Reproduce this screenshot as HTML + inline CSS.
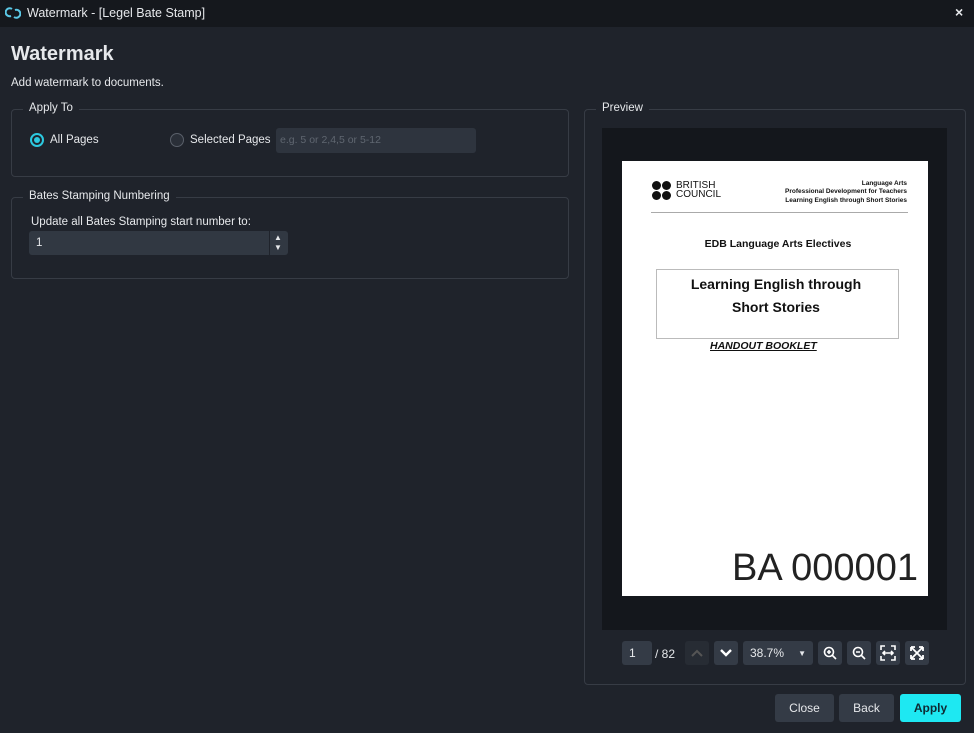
<!DOCTYPE html><html><head><style>
*{margin:0;padding:0;box-sizing:border-box}
body{width:974px;height:733px;background:#1f232b;font-family:"Liberation Sans",sans-serif;color:#e6e8eb;position:relative;overflow:hidden;font-size:12px}
.a{position:absolute}
.box{position:absolute;border:1px solid #373c45;border-radius:4px}
.leg{position:absolute;background:#1f232b;padding:0 6px;font-size:11.5px;color:#e6e8eb}
.btn{position:absolute;background:#343b46;border-radius:3px;display:flex;align-items:center;justify-content:center}
.pb{font-family:"Liberation Sans",sans-serif;font-weight:bold;color:#111}
.d{position:absolute;width:9px;height:9px;border-radius:50%;background:#111}
</style></head><body>
<div class="a" style="left:0;top:0;width:974px;height:27px;background:#15181d"></div>
<svg class="a" style="left:5px;top:6px" width="16" height="14" viewBox="0 0 16 14"><path d="M7 3 A4 4 0 1 0 6 10 M9 11 A4 4 0 1 0 10 4" stroke="#5bc8e6" stroke-width="2" fill="none"/></svg>
<div class="a" style="left:27px;top:6px;font-size:12.5px">Watermark - [Legel Bate Stamp]</div>
<div class="a" style="left:955px;top:4px;font-size:14px;font-weight:bold">×</div>
<div class="a" style="left:11px;top:43px;font-size:20px;font-weight:bold">Watermark</div>
<div class="a" style="left:11px;top:77px;font-size:11.5px">Add watermark to documents.</div>

<div class="box" style="left:11px;top:109px;width:558px;height:68px"></div>
<div class="leg" style="left:23px;top:102px">Apply To</div>
<div class="a" style="left:30px;top:133px;width:14px;height:14px;border-radius:50%;border:2px solid #2cc9e0;background:#1f232b"><div style="margin:2px;width:6px;height:6px;border-radius:50%;background:#2cc9e0"></div></div>
<div class="a" style="left:50px;top:134px;font-size:11.5px">All Pages</div>
<div class="a" style="left:170px;top:133px;width:14px;height:14px;border-radius:50%;border:1px solid #5a606a;background:#2a2f38"></div>
<div class="a" style="left:190px;top:134px;font-size:11.5px">Selected Pages</div>
<div class="a" style="left:276px;top:128px;width:200px;height:25px;background:#2e343e;border-radius:3px;color:#5f6670;font-size:10.5px;padding:6px 4px">e.g. 5 or 2,4,5 or 5-12</div>

<div class="box" style="left:11px;top:197px;width:558px;height:82px"></div>
<div class="leg" style="left:23px;top:190px">Bates Stamping Numbering</div>
<div class="a" style="left:31px;top:216px;font-size:11.5px">Update all Bates Stamping start number to:</div>
<div class="a" style="left:29px;top:231px;width:259px;height:24px;background:#313842;border-radius:3px;padding:6px 7px;font-size:11.5px">1</div>
<div class="a" style="left:269px;top:231px;width:1px;height:24px;background:#1f232b"></div>
<div class="a" style="left:274px;top:233px;font-size:8px">▲</div><div class="a" style="left:274px;top:243px;font-size:8px">▼</div>

<div class="box" style="left:584px;top:109px;width:382px;height:576px"></div>
<div class="leg" style="left:596px;top:102px">Preview</div>
<div class="a" style="left:602px;top:128px;width:345px;height:502px;background:#14171c"></div>
<div class="a" style="left:622px;top:161px;width:306px;height:435px;background:#fff"></div>
<div class="d" style="left:652px;top:181px"></div><div class="d" style="left:662px;top:181px"></div>
<div class="d" style="left:652px;top:191px"></div><div class="d" style="left:662px;top:191px"></div>
<div class="a" style="left:676px;top:181px;font-size:10px;line-height:9px;color:#111">BRITISH<br>COUNCIL</div>
<div class="a pb" style="left:760px;top:180px;width:147px;text-align:right;font-size:6.5px;line-height:8.3px">Language Arts<br>Professional Development for Teachers<br>Learning English through Short Stories</div>
<div class="a" style="left:651px;top:212px;width:257px;height:1px;background:#aaa"></div>
<div class="a pb" style="left:622px;top:238px;width:312px;text-align:center;font-size:10.5px">EDB Language Arts Electives</div>
<div class="a" style="left:656px;top:269px;width:243px;height:70px;border:1px solid #bbb"></div>
<div class="a pb" style="left:656px;top:273px;width:240px;text-align:center;font-size:14px;line-height:23px">Learning English through<br>Short Stories</div>
<div class="a pb" style="left:710px;top:340px;font-size:10.5px;font-style:italic;text-decoration:underline">HANDOUT BOOKLET</div>
<div class="a" style="left:732px;top:547px;font-size:38px;color:#222">BA 000001</div>

<div class="btn" style="left:622px;top:641px;width:30px;height:24px;justify-content:flex-start;padding-left:7px">1</div>
<div class="a" style="left:655px;top:647px">/ 82</div>
<div class="btn" style="left:685px;top:641px;width:24px;height:24px;background:#272c34"><svg width="14" height="10"><path d="M2 8 L7 3 L12 8" stroke="#555" stroke-width="2" fill="none"/></svg></div>
<div class="btn" style="left:714px;top:641px;width:24px;height:24px"><svg width="14" height="10"><path d="M2 2 L7 7 L12 2" stroke="#fff" stroke-width="2.4" fill="none"/></svg></div>
<div class="btn" style="left:743px;top:641px;width:70px;height:24px;justify-content:space-between;padding:0 7px"><span>38.7%</span><span style="font-size:8px">▼</span></div>
<div class="btn" style="left:818px;top:641px;width:24px;height:24px"><svg width="16" height="16"><circle cx="7" cy="7" r="4.5" stroke="#fff" stroke-width="1.6" fill="none"/><path d="M10 10 L14 14 M5 7 H9 M7 5 V9" stroke="#fff" stroke-width="1.6"/></svg></div>
<div class="btn" style="left:847px;top:641px;width:24px;height:24px"><svg width="16" height="16"><circle cx="7" cy="7" r="4.5" stroke="#fff" stroke-width="1.6" fill="none"/><path d="M10 10 L14 14 M5 7 H9" stroke="#fff" stroke-width="1.6"/></svg></div>
<div class="btn" style="left:876px;top:641px;width:24px;height:24px"><svg width="16" height="16"><path d="M1 5 V1 H5 M11 1 H15 V5 M15 11 V15 H11 M5 15 H1 V11 M4 8 H12 M5 6 L3 8 L5 10 M11 6 L13 8 L11 10" stroke="#fff" stroke-width="1.6" fill="none"/></svg></div>
<div class="btn" style="left:905px;top:641px;width:24px;height:24px"><svg width="16" height="16"><path d="M2 2 L14 14 M14 2 L2 14 M2 2 H6 M2 2 V6 M14 2 H10 M14 2 V6 M2 14 H6 M2 14 V10 M14 14 H10 M14 14 V10" stroke="#fff" stroke-width="1.8" fill="none"/></svg></div>

<div class="btn" style="left:775px;top:694px;width:59px;height:28px">Close</div>
<div class="btn" style="left:839px;top:694px;width:55px;height:28px">Back</div>
<div class="btn" style="left:900px;top:694px;width:61px;height:28px;background:#1ee8f2;color:#0e2a33;font-weight:bold">Apply</div>
</body></html>
